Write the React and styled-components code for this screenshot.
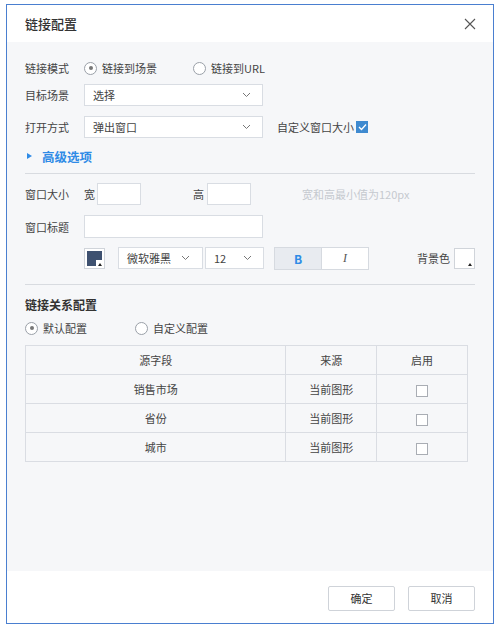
import React, { useState } from "react";
import styled, { createGlobalStyle } from "styled-components";

const GlobalStyle = createGlobalStyle`
  body {
    margin: 0;
    background: #ffffff;
    font-family: "Noto Sans CJK SC", "Noto Sans", sans-serif;
    color: #333;
  }
`;

const Dialog = styled.div`
  margin: 4px 0 0 6px;
  width: 486px;
  height: 618px;
  border: 1px solid #4a7fd0;
  display: flex;
  flex-direction: column;
  background: #f6f7f9;
`;

const Header = styled.div`
  height: 37px;
  background: #fff;
  display: flex;
  align-items: center;
  justify-content: space-between;
  padding: 0 18px;
`;

const Title = styled.div`
  font-size: 13px;
  font-weight: 500;
  color: #333;
`;

const Close = styled.button`
  border: none;
  background: none;
  padding: 0;
  width: 14px;
  height: 14px;
  display: flex;
  align-items: center;
  justify-content: center;
  margin-right: -2px;
`;

const Body = styled.div`
  flex: 1;
  padding: 15px 18px 0 18px;
  display: flex;
  flex-direction: column;
`;

const Row = styled.div`
  display: flex;
  align-items: center;
  height: ${(p) => p.$h || 22}px;
  margin-top: ${(p) => p.$mt || 0}px;
`;

const Label = styled.div`
  width: 59px;
  flex-shrink: 0;
  font-size: 11px;
  color: #444;
`;

const Text = styled.span`
  font-size: 11px;
  white-space: nowrap;
  flex-shrink: 0;
  color: ${(p) => p.$color || "#444"};
  margin-left: ${(p) => p.$ml || 0}px;
  margin-right: ${(p) => p.$mr || 0}px;
`;

const RadioWrap = styled.label`
  display: flex;
  align-items: center;
  width: ${(p) => p.$w}px;
  font-size: 11px;
  color: #444;
  cursor: pointer;
`;

const RadioDot = styled.span`
  width: 11px;
  height: 11px;
  border: 1px solid #9aa0a8;
  border-radius: 50%;
  background: #fff;
  display: flex;
  align-items: center;
  justify-content: center;
  margin-right: 5px;
  flex-shrink: 0;
  &::after {
    content: "";
    width: 4px;
    height: 4px;
    border-radius: 50%;
    background: ${(p) => (p.$on ? "#777" : "transparent")};
  }
`;

const SelectBox = styled.div`
  width: ${(p) => p.$w}px;
  height: ${(p) => p.$h || 22}px;
  flex-shrink: 0;
  box-sizing: border-box;
  border: 1px solid #d9dde3;
  background: #fff;
  display: flex;
  align-items: center;
  justify-content: space-between;
  padding: 0 ${(p) => p.$pr || 11}px 0 8px;
  font-size: 11px;
  color: #444;
  margin-left: ${(p) => p.$ml || 0}px;
`;

const Input = styled.div`
  width: ${(p) => p.$w}px;
  height: ${(p) => p.$h || 22}px;
  flex-shrink: 0;
  box-sizing: border-box;
  border: 1px solid #d9dde3;
  background: #fff;
  margin-left: ${(p) => p.$ml || 0}px;
`;

const Check = styled.span`
  width: 12px;
  height: 12px;
  box-sizing: border-box;
  border: 1px solid ${(p) => (p.$on ? "#3f8ad0" : "#a9adb4")};
  background: ${(p) => (p.$on ? "#3f8ad0" : "#fff")};
  display: inline-flex;
  align-items: center;
  justify-content: center;
  vertical-align: middle;
  margin-left: ${(p) => p.$ml || 0}px;
`;

const Advanced = styled.div`
  display: flex;
  align-items: center;
  height: 18px;
  margin-top: 9px;
  color: #2f8be6;
  font-size: 12.5px;
  font-weight: 700;
  &::before {
    content: "";
    border-left: 5px solid #2f8be6;
    border-top: 3.5px solid transparent;
    border-bottom: 3.5px solid transparent;
    margin: 0 10px 0 2px;
  }
`;

const Divider = styled.div`
  height: 1px;
  background: #d8dbe0;
  margin-top: ${(p) => p.$mt}px;
`;

const Swatch = styled.div`
  position: relative;
  width: 21px;
  height: 21px;
  flex-shrink: 0;
  box-sizing: border-box;
  border: 1px solid #d0d4da;
  background: #fff;
  padding: 2px;
  margin-left: ${(p) => p.$ml || 0}px;
  &::before {
    content: "";
    display: block;
    width: 100%;
    height: 100%;
    background: ${(p) => p.$fill};
  }
`;

const SwatchCorner = styled.span`
  position: absolute;
  right: 1px;
  bottom: 1px;
  width: 7px;
  height: 7px;
  background: #fff;
  display: flex;
  align-items: flex-end;
  justify-content: center;
  &::after {
    content: "";
    border-bottom: 3px solid #222;
    border-left: 2.5px solid transparent;
    border-right: 2.5px solid transparent;
    margin-bottom: 1px;
  }
`;

const StyleGroup = styled.div`
  display: flex;
  flex-shrink: 0;
  margin-left: 10px;
  height: 23px;
  box-sizing: border-box;
  border: 1px solid #d6dae0;
  background: #fff;
`;

const StyleBtn = styled.div`
  width: 46px;
  display: flex;
  align-items: center;
  justify-content: center;
  background: ${(p) => (p.$active ? "#e8ebf0" : "#fff")};
  border-left: ${(p) => (p.$first ? "none" : "1px solid #d6dae0")};
  font-size: 12px;
  color: ${(p) => (p.$active ? "#2f8be6" : "#555")};
  font-weight: ${(p) => (p.$bold ? 700 : 400)};
  font-style: ${(p) => (p.$italic ? "italic" : "normal")};
  font-family: ${(p) => (p.$italic ? '"Liberation Serif", serif' : "inherit")};
`;

const Section = styled.div`
  font-size: 12px;
  font-weight: 700;
  color: #333;
  height: 18px;
  display: flex;
  align-items: center;
  margin-top: 10px;
`;

const Table = styled.table`
  margin-top: 6px;
  width: 443px;
  border-collapse: collapse;
  font-size: 11px;
  color: #444;
  td,
  th {
    border: 1px solid #dadde3;
    height: 28px;
    padding: 0;
    text-align: center;
    vertical-align: middle;
    font-weight: 400;
  }
`;

const Footer = styled.div`
  height: 52px;
  background: #fff;
  display: flex;
  align-items: center;
  justify-content: flex-end;
  gap: 13px;
  padding: 0 18px 0 0;
`;

const Button = styled.button`
  width: 67px;
  height: 25px;
  background: #fff;
  border: 1px solid #cfd3d9;
  border-radius: 2px;
  font-family: inherit;
  font-size: 11px;
  color: #333;
  margin-top: 2px;
`;

const Chevron = () => (
  <svg width="9" height="6" viewBox="0 0 9 6">
    <path d="M1 1l3.5 3.5L8 1" fill="none" stroke="#777" strokeWidth="1" />
  </svg>
);

const Tick = () => (
  <svg width="9" height="8" viewBox="0 0 9 8">
    <path d="M1 4l2.5 2.5L8 1.5" fill="none" stroke="#fff" strokeWidth="1.3" />
  </svg>
);

const rows = ["销售市场", "省份", "城市"];

const App = () => {
  const [mode, setMode] = useState("scene");
  const [rel, setRel] = useState("default");
  return (
    <>
      <GlobalStyle />
      <Dialog>
        <Header>
          <Title>链接配置</Title>
          <Close>
            <svg width="12" height="12" viewBox="0 0 12 12">
              <path d="M1 1l10 10M11 1L1 11" stroke="#555" strokeWidth="1.1" />
            </svg>
          </Close>
        </Header>
        <Body>
          <Row>
            <Label>链接模式</Label>
            <RadioWrap $w={109} onClick={() => setMode("scene")}>
              <RadioDot $on={mode === "scene"} />
              链接到场景
            </RadioWrap>
            <RadioWrap $w={100} onClick={() => setMode("url")}>
              <RadioDot $on={mode === "url"} />
              链接到URL
            </RadioWrap>
          </Row>
          <Row $mt={5}>
            <Label>目标场景</Label>
            <SelectBox $w={179}>
              选择
              <Chevron />
            </SelectBox>
          </Row>
          <Row $mt={10}>
            <Label>打开方式</Label>
            <SelectBox $w={179}>
              弹出窗口
              <Chevron />
            </SelectBox>
            <Text $ml={14}>自定义窗口大小</Text>
            <Check $on $ml={2}>
              <Tick />
            </Check>
          </Row>
          <Advanced>高级选项</Advanced>
          <Divider $mt={8} />
          <Row $mt={9}>
            <Label>窗口大小</Label>
            <Text>宽</Text>
            <Input $w={44} $ml={2} />
            <Text $ml={52}>高</Text>
            <Input $w={44} $ml={3} />
            <Text $ml={51} $color="#c5c9cf">
              宽和高最小值为120px
            </Text>
          </Row>
          <Row $mt={10} $h={23}>
            <Label>窗口标题</Label>
            <Input $w={179} $h={23} />
          </Row>
          <Row $mt={9}>
            <Swatch $ml={59} $fill="#3e5170">
              <SwatchCorner />
            </Swatch>
            <SelectBox $w={85} $ml={13} $pr={12}>
              微软雅黑
              <Chevron />
            </SelectBox>
            <SelectBox $w={59} $ml={2}>
              12
              <Chevron />
            </SelectBox>
            <StyleGroup>
              <StyleBtn $active $bold $first>
                B
              </StyleBtn>
              <StyleBtn $italic>I</StyleBtn>
            </StyleGroup>
            <Text $ml={48} $mr={4}>
              背景色
            </Text>
            <Swatch $fill="#fff">
              <SwatchCorner />
            </Swatch>
          </Row>
          <Divider $mt={15} />
          <Section>链接关系配置</Section>
          <Row $mt={4}>
            <RadioWrap $w={110} onClick={() => setRel("default")}>
              <RadioDot $on={rel === "default"} />
              默认配置
            </RadioWrap>
            <RadioWrap $w={100} onClick={() => setRel("custom")}>
              <RadioDot $on={rel === "custom"} />
              自定义配置
            </RadioWrap>
          </Row>
          <Table>
            <colgroup>
              <col style={{ width: 261 }} />
              <col style={{ width: 91 }} />
              <col style={{ width: 91 }} />
            </colgroup>
            <thead>
              <tr>
                <th>源字段</th>
                <th>来源</th>
                <th>启用</th>
              </tr>
            </thead>
            <tbody>
              {rows.map((r) => (
                <tr key={r}>
                  <td>{r}</td>
                  <td>当前图形</td>
                  <td>
                    <Check />
                  </td>
                </tr>
              ))}
            </tbody>
          </Table>
        </Body>
        <Footer>
          <Button>确定</Button>
          <Button>取消</Button>
        </Footer>
      </Dialog>
    </>
  );
};

export default App;
